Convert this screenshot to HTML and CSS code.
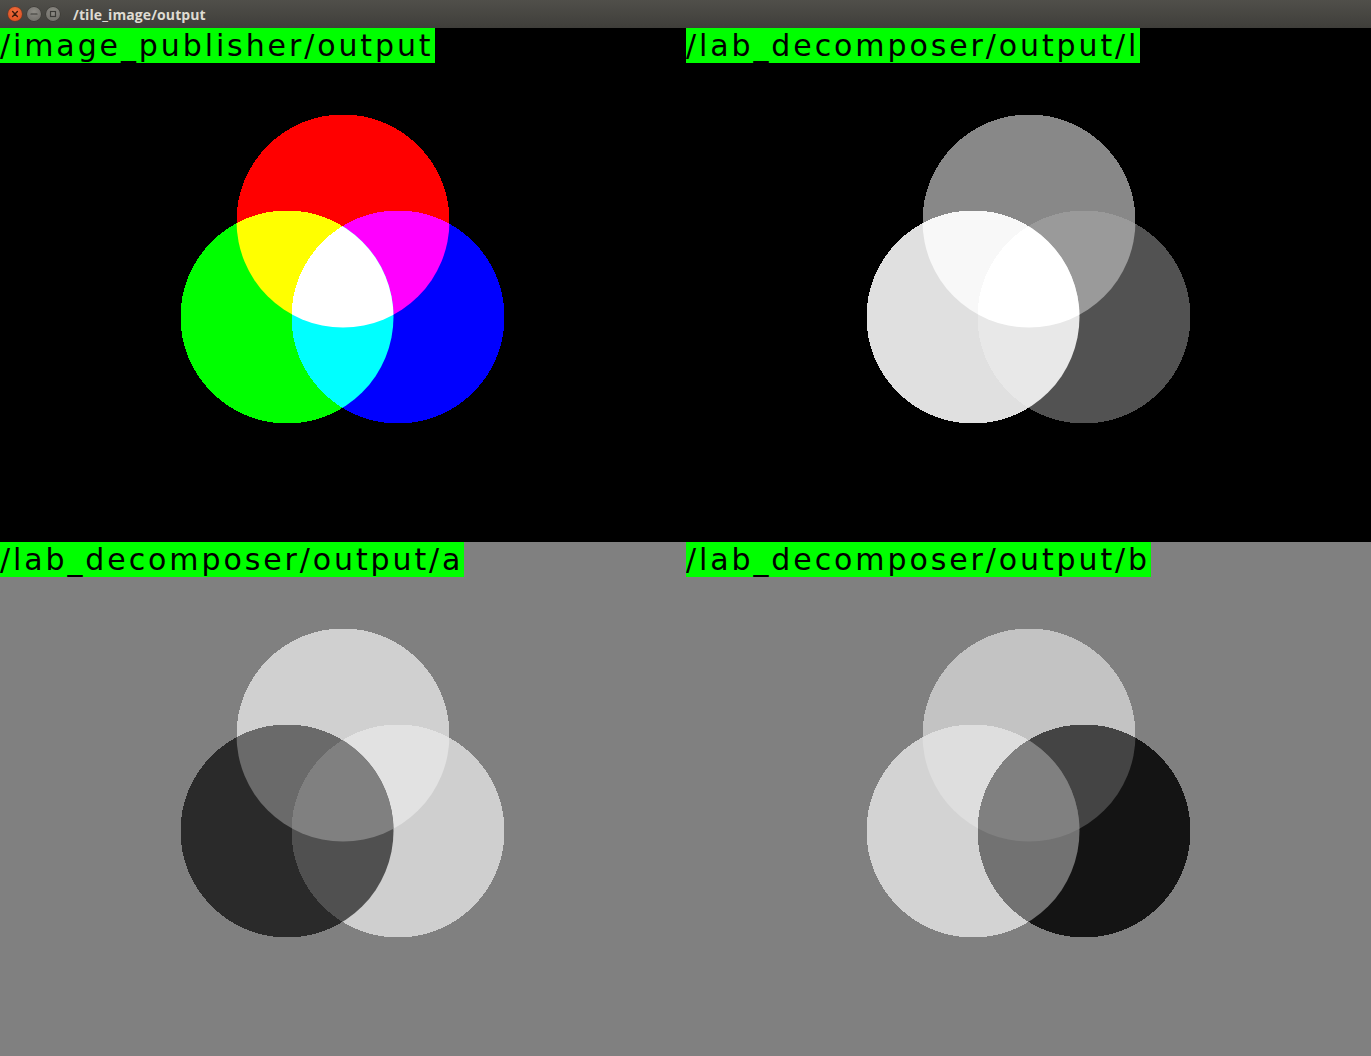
FILE: index.html
```html
<!DOCTYPE html>
<html>
<head>
<meta charset="utf-8">
<title>/tile_image/output</title>
<link rel="stylesheet" href="styles.css">
</head>
<body>
<svg class="defs" width="0" height="0" aria-hidden="true">
  <defs>
    <clipPath id="clipR"><circle cx="343" cy="193" r="106.5"/></clipPath>
    <clipPath id="clipG"><circle cx="287" cy="289" r="106.5"/></clipPath>
  </defs>
</svg>
<div class="window">
  <header class="titlebar">
    <div class="controls">
      <span class="btn close"><svg viewBox="0 0 14 14" width="14" height="14"><path d="M4.6 4.6 L9.4 9.4 M9.4 4.6 L4.6 9.4" class="glyph"/></svg></span>
      <span class="btn min"><svg viewBox="0 0 14 14" width="14" height="14"><path d="M4 7 H10" class="glyph dark"/></svg></span>
      <span class="btn max"><svg viewBox="0 0 14 14" width="14" height="14"><rect x="4.5" y="4.5" width="5" height="5" class="glyph dark"/></svg></span>
    </div>
    <div class="title">/tile_image/output</div>
  </header>
  <main class="tiles">
    <section class="tile tile-rgb">
      <div class="label">/image_publisher/output</div>
      <svg class="art" viewBox="0 0 686 514">
        <circle class="r" cx="343" cy="193" r="106.5"/>
        <circle class="g" cx="287" cy="289" r="106.5"/>
        <circle class="b" cx="398" cy="289" r="106.5"/>
        <g clip-path="url(#clipR)"><circle class="rg" cx="287" cy="289" r="106.5"/></g>
        <g clip-path="url(#clipR)"><circle class="rb" cx="398" cy="289" r="106.5"/></g>
        <g clip-path="url(#clipG)"><circle class="gb" cx="398" cy="289" r="106.5"/></g>
        <g clip-path="url(#clipR)"><g clip-path="url(#clipG)"><circle class="w" cx="398" cy="289" r="106.5"/></g></g>
      </svg>
    </section>
    <section class="tile tile-l">
      <div class="label">/lab_decomposer/output/l</div>
      <svg class="art" viewBox="0 0 686 514">
        <circle class="r" cx="343" cy="193" r="106.5"/>
        <circle class="g" cx="287" cy="289" r="106.5"/>
        <circle class="b" cx="398" cy="289" r="106.5"/>
        <g clip-path="url(#clipR)"><circle class="rg" cx="287" cy="289" r="106.5"/></g>
        <g clip-path="url(#clipR)"><circle class="rb" cx="398" cy="289" r="106.5"/></g>
        <g clip-path="url(#clipG)"><circle class="gb" cx="398" cy="289" r="106.5"/></g>
        <g clip-path="url(#clipR)"><g clip-path="url(#clipG)"><circle class="w" cx="398" cy="289" r="106.5"/></g></g>
      </svg>
    </section>
    <section class="tile tile-a">
      <div class="label">/lab_decomposer/output/a</div>
      <svg class="art" viewBox="0 0 686 514">
        <circle class="r" cx="343" cy="193" r="106.5"/>
        <circle class="g" cx="287" cy="289" r="106.5"/>
        <circle class="b" cx="398" cy="289" r="106.5"/>
        <g clip-path="url(#clipR)"><circle class="rg" cx="287" cy="289" r="106.5"/></g>
        <g clip-path="url(#clipR)"><circle class="rb" cx="398" cy="289" r="106.5"/></g>
        <g clip-path="url(#clipG)"><circle class="gb" cx="398" cy="289" r="106.5"/></g>
        <g clip-path="url(#clipR)"><g clip-path="url(#clipG)"><circle class="w" cx="398" cy="289" r="106.5"/></g></g>
      </svg>
    </section>
    <section class="tile tile-b">
      <div class="label">/lab_decomposer/output/b</div>
      <svg class="art" viewBox="0 0 686 514">
        <circle class="r" cx="343" cy="193" r="106.5"/>
        <circle class="g" cx="287" cy="289" r="106.5"/>
        <circle class="b" cx="398" cy="289" r="106.5"/>
        <g clip-path="url(#clipR)"><circle class="rg" cx="287" cy="289" r="106.5"/></g>
        <g clip-path="url(#clipR)"><circle class="rb" cx="398" cy="289" r="106.5"/></g>
        <g clip-path="url(#clipG)"><circle class="gb" cx="398" cy="289" r="106.5"/></g>
        <g clip-path="url(#clipR)"><g clip-path="url(#clipG)"><circle class="w" cx="398" cy="289" r="106.5"/></g></g>
      </svg>
    </section>
  </main>
</div>
</body>
</html>
```
FILE: styles.css
```css
html, body {
  margin: 0;
  padding: 0;
  background: #808080;
  overflow: hidden;
}
.defs {
  position: absolute;
  width: 0;
  height: 0;
}
.defs circle {
  shape-rendering: crispEdges;
}
.window {
  width: 1371px;
  height: 1056px;
  display: flex;
  flex-direction: column;
}
.titlebar {
  height: 28px;
  flex: 0 0 28px;
  display: flex;
  align-items: center;
  background: linear-gradient(#504f4a, #3f3e3a);
  box-sizing: border-box;
}
.controls {
  display: flex;
  gap: 5px;
  padding-left: 8px;
  align-items: center;
}
.btn {
  width: 14px;
  height: 14px;
  border-radius: 50%;
  display: flex;
}
.btn.close {
  background: radial-gradient(circle at 50% 35%, #f0703f, #d9481a);
  box-shadow: 0 0 0 0.5px #8a2f10;
}
.btn.min, .btn.max {
  background: radial-gradient(circle at 50% 35%, #8e8c86, #6b6964);
  box-shadow: 0 0 0 0.5px #35342f;
}
.glyph {
  fill: none;
  stroke: #3c1a0c;
  stroke-width: 1.4;
  stroke-linecap: round;
}
.glyph.dark {
  stroke: #3b3a36;
  stroke-width: 1.2;
}
.title {
  margin-left: 13px;
  font-family: "Open Sans", "DejaVu Sans", sans-serif;
  font-weight: 700;
  font-size: 14px;
  color: #dfdbd2;
  letter-spacing: 0.1px;
}
.tiles {
  display: grid;
  grid-template-columns: 686px 685px;
  grid-template-rows: 514px 514px;
}
.tile {
  position: relative;
  overflow: hidden;
}
.tile-rgb, .tile-l {
  background: #000;
}
.tile-a, .tile-b {
  background: #808080;
}
.art {
  display: block;
  width: 686px;
  height: 514px;
}
.art circle {
  shape-rendering: crispEdges;
}
.label {
  position: absolute;
  top: 0;
  left: 0;
  height: 35px;
  box-sizing: border-box;
  padding: 0 1px 0 0;
  background: #00ff00;
  color: #000;
  font-family: "DejaVu Sans", sans-serif;
  font-size: 30px;
  line-height: 35px;
  letter-spacing: 2.9px;
  white-space: nowrap;
}

/* RGB source image */
.tile-rgb .r { fill: #ff0000; }
.tile-rgb .g { fill: #00ff00; }
.tile-rgb .b { fill: #0000ff; }
.tile-rgb .rg { fill: #ffff00; }
.tile-rgb .rb { fill: #ff00ff; }
.tile-rgb .gb { fill: #00ffff; }
.tile-rgb .w { fill: #ffffff; }

/* L channel */
.tile-l .r { fill: #888888; }
.tile-l .g { fill: #e0e0e0; }
.tile-l .b { fill: #525252; }
.tile-l .rg { fill: #f8f8f8; }
.tile-l .rb { fill: #9a9a9a; }
.tile-l .gb { fill: #e8e8e8; }
.tile-l .w { fill: #ffffff; }

/* a channel */
.tile-a .r { fill: #d0d0d0; }
.tile-a .g { fill: #2a2a2a; }
.tile-a .b { fill: #cfcfcf; }
.tile-a .rg { fill: #6a6a6a; }
.tile-a .rb { fill: #e2e2e2; }
.tile-a .gb { fill: #505050; }
.tile-a .w { fill: #808080; }

/* b channel */
.tile-b .r { fill: #c3c3c3; }
.tile-b .g { fill: #d3d3d3; }
.tile-b .b { fill: #141414; }
.tile-b .rg { fill: #dedede; }
.tile-b .rb { fill: #444444; }
.tile-b .gb { fill: #727272; }
.tile-b .w { fill: #808080; }
```
